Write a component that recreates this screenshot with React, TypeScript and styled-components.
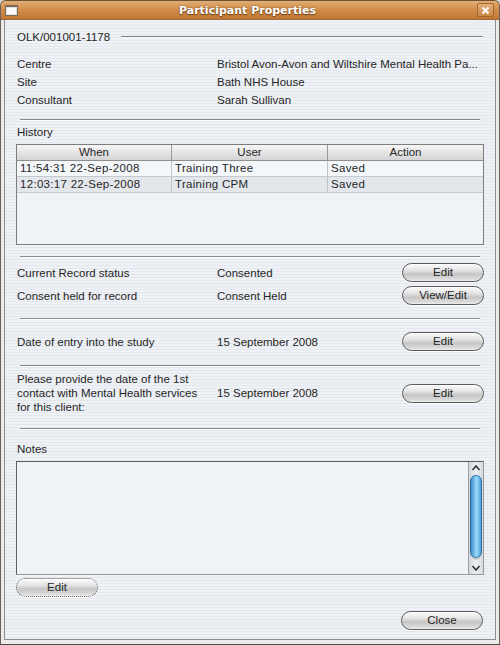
import React from "react";
import styled, { createGlobalStyle } from "styled-components";

const Global = createGlobalStyle`
  html, body { margin: 0; padding: 0; background: #d8d4ce; }
  body { font-family: "Liberation Sans", Arial, sans-serif; }
`;

const Window = styled.div`
  width: 500px;
  height: 645px;
  box-sizing: border-box;
  display: flex;
  flex-direction: column;
  background: #c98b4e;
  border-radius: 6px 6px 0 0;
  overflow: hidden;
  border: 1px solid #6e5236;
  border-bottom-color: #4a4a4a;
  border-left-color: #6a6258;
  border-right-color: #6a6258;
`;

const TitleBar = styled.div`
  height: 18px;
  flex: none;
  display: flex;
  align-items: center;
  padding: 0 4px;
  background: linear-gradient(#e2ad77, #d28f4b 45%, #c07634);
  border-bottom: 1px solid #9c6a3a;
`;

const MenuIcon = styled.div`
  width: 11px;
  height: 8px;
  background: #fafafa;
  border: 1px solid #7a6a5a;
  border-top-width: 2px;
  box-shadow: inset 0 0 0 1px #e0e0e0;
  flex: none;
`;

const Title = styled.div`
  flex: 1;
  text-align: center;
  font-family: "DejaVu Sans", sans-serif;
  font-weight: bold;
  font-size: 11px;
  color: #fff;
  text-shadow: 0 1px 1px #6a3f16, 0 0 2px #8a5220;
`;

const CloseBtn = styled.div`
  width: 15px;
  height: 12px;
  border: 1px solid #a4672d;
  border-radius: 2px;
  background: linear-gradient(#e3b07c, #c98743);
  display: flex;
  align-items: center;
  justify-content: center;
  flex: none;
  margin-right: 1px;
`;

const Frame = styled.div`
  flex: 1;
  display: flex;
  flex-direction: column;
  background: #ecebe8;
  padding: 0 3px 4px 3px;
`;

const Content = styled.div`
  flex: 1;
  display: flex;
  flex-direction: column;
  padding: 0 11px;
  border: 1px solid #8e8e8e;
  border-top: none;
  color: #262626;
  font-size: 11.5px;
  background: repeating-linear-gradient(
    to bottom,
    #eef1f5 0px,
    #eef1f5 2px,
    #e4e8ed 2px,
    #e4e8ed 3px
  );
`;

const HeaderRow = styled.div`
  margin-top: 9px;
  height: 16px;
  display: flex;
  align-items: center;
  gap: 11px;
  padding-left: 1px;
`;

const HeaderLine = styled.div`
  flex: 1;
  height: 0;
  border-top: 1px solid #7e7e7e;
  border-bottom: 1px solid #fbfbfb;
  margin-right: 1px;
`;

const InfoGrid = styled.div`
  margin-top: 10px;
  display: grid;
  grid-template-columns: 200px 1fr;
  grid-auto-rows: 18px;
  align-items: center;
  padding-left: 1px;
`;

const Value = styled.div`
  white-space: nowrap;
  overflow: hidden;
`;

const Separator = styled.div<{ $mt: number }>`
  margin: ${(p) => p.$mt}px 4px 0 4px;
  height: 0;
  border-top: 1px solid #8a8a8a;
  border-bottom: 1px solid #fdfdfd;
`;

const Label = styled.div<{ $mt: number }>`
  margin-top: ${(p) => p.$mt}px;
  height: 14px;
  line-height: 14px;
  padding-left: 1px;
`;

const Table = styled.div`
  margin-top: 5px;
  height: 101px;
  box-sizing: border-box;
  border: 1px solid #7d7d7d;
  background: #eff3f7;
  display: flex;
  flex-direction: column;
`;

const TableRow = styled.div<{ $alt?: boolean; $head?: boolean }>`
  display: grid;
  grid-template-columns: 155px 156px 1fr;
  height: 16px;
  box-sizing: border-box;
  border-bottom: 1px solid ${(p) => (p.$head ? "#8e8e8e" : "#c4c9cf")};
  background: ${(p) =>
    p.$head
      ? "linear-gradient(#f6f6f6, #e2e2e2 60%, #d4d4d4)"
      : p.$alt
      ? "#e3e7ec"
      : "#f4f7fa"};
`;

const Cell = styled.div<{ $head?: boolean; $last?: boolean }>`
  line-height: 15px;
  padding: 0 3px;
  white-space: nowrap;
  overflow: hidden;
  letter-spacing: ${(p) => (p.$head ? "0" : "0.3px")};
  text-align: ${(p) => (p.$head ? "center" : "left")};
  border-right: ${(p) =>
    p.$last ? "none" : `1px solid ${p.$head ? "#9a9a9a" : "#bfc4ca"}`};
`;

const ActionRow = styled.div<{ $mt: number }>`
  margin-top: ${(p) => p.$mt}px;
  display: grid;
  grid-template-columns: 200px 1fr 82px;
  align-items: center;
  padding-left: 1px;
`;

const MultiLabel = styled.div`
  line-height: 14px;
  white-space: nowrap;
`;

const PillButton = styled.button<{ $dotted?: boolean }>`
  width: 82px;
  height: 19px;
  box-sizing: border-box;
  border-radius: 10px;
  border: 1px ${(p) => (p.$dotted ? "dotted" : "solid")} #5a5a5a;
  background: linear-gradient(#fbfbfb 0%, #e6e6e6 35%, #c6c6c6 60%, #d8d8d8 85%, #ececec 100%);
  box-shadow: inset 0 1px 0 #ffffff, 0 1px 0 rgba(255, 255, 255, 0.8);
  font-family: "Liberation Sans", Arial, sans-serif;
  font-size: 11.5px;
  color: #262626;
  padding: 0;
  line-height: 17px;
`;

const NotesBox = styled.div`
  margin-top: 5px;
  height: 114px;
  box-sizing: border-box;
  border: 1px solid #5f5f5f;
  border-right-color: #9a9a9a;
  border-bottom-color: #9a9a9a;
  background: #eff3f7;
  display: flex;
  justify-content: flex-end;
`;

const ScrollBar = styled.div`
  width: 14px;
  background: linear-gradient(to right, #d2d6db, #eef0f3 50%, #d6dade);
  border-left: 1px solid #9ca1a7;
  display: flex;
  flex-direction: column;
  align-items: center;
`;

const Arrow = styled.div`
  height: 12px;
  width: 14px;
  display: flex;
  align-items: center;
  justify-content: center;
  flex: none;
`;

const Thumb = styled.div`
  flex: 1;
  width: 12px;
  margin: 1px 0 4px;
  border-radius: 6px;
  border: 1px solid #2f6f9c;
  box-sizing: border-box;
  background: linear-gradient(to right, #3d8fcb, #7fc7f2 40%, #9fdaf9 55%, #4aa2dc);
  box-shadow: 0 2px 0 #c9ccd2;
`;

const BottomBar = styled.div`
  margin-top: 14px;
  display: flex;
  justify-content: flex-end;
  margin-right: 1px;
`;

const LeftBar = styled.div`
  margin-top: 3px;
  display: flex;
`;

const Chevron = ({ up }: { up?: boolean }) => (
  <svg width="10" height="8" viewBox="0 0 10 8">
    <path
      d={up ? "M1.5 6 L5 2 L8.5 6" : "M1.5 2 L5 6 L8.5 2"}
      fill="none"
      stroke="#333"
      strokeWidth="1.6"
    />
  </svg>
);

const history = [
  ["11:54:31 22-Sep-2008", "Training Three", "Saved"],
  ["12:03:17 22-Sep-2008", "Training CPM", "Saved"],
];

export default function App() {
  return (
    <>
      <Global />
      <Window>
        <TitleBar>
          <MenuIcon />
          <Title>Participant Properties</Title>
          <CloseBtn>
            <svg width="9" height="9" viewBox="0 0 9 9">
              <path d="M1.5 1.5 L7.5 7.5 M7.5 1.5 L1.5 7.5" stroke="#fff" strokeWidth="2" />
            </svg>
          </CloseBtn>
        </TitleBar>
        <Frame>
          <Content>
            <HeaderRow>
              <span>OLK/001001-1178</span>
              <HeaderLine />
            </HeaderRow>
            <InfoGrid>
              <div>Centre</div>
              <Value>Bristol Avon-Avon and Wiltshire Mental Health Pa...</Value>
              <div>Site</div>
              <Value>Bath NHS House</Value>
              <div>Consultant</div>
              <Value>Sarah Sullivan</Value>
            </InfoGrid>
            <Separator $mt={10} />
            <Label $mt={4}>History</Label>
            <Table>
              <TableRow $head>
                <Cell $head>When</Cell>
                <Cell $head>User</Cell>
                <Cell $head $last>Action</Cell>
              </TableRow>
              {history.map((r, i) => (
                <TableRow key={i} $alt={i % 2 === 1}>
                  <Cell>{r[0]}</Cell>
                  <Cell>{r[1]}</Cell>
                  <Cell $last>{r[2]}</Cell>
                </TableRow>
              ))}
            </Table>
            <Separator $mt={11} />
            <ActionRow $mt={5}>
              <div>Current Record status</div>
              <div>Consented</div>
              <PillButton>Edit</PillButton>
            </ActionRow>
            <ActionRow $mt={4}>
              <div>Consent held for record</div>
              <div>Consent Held</div>
              <PillButton>View/Edit</PillButton>
            </ActionRow>
            <Separator $mt={13} />
            <ActionRow $mt={12}>
              <div>Date of entry into the study</div>
              <div>15 September 2008</div>
              <PillButton>Edit</PillButton>
            </ActionRow>
            <Separator $mt={14} />
            <ActionRow $mt={5}>
              <MultiLabel>
                Please provide the date of the 1st
                <br />
                contact with Mental Health services
                <br />
                for this client:
              </MultiLabel>
              <div>15 September 2008</div>
              <PillButton>Edit</PillButton>
            </ActionRow>
            <Separator $mt={14} />
            <Label $mt={12}>Notes</Label>
            <NotesBox>
              <ScrollBar>
                <Arrow>
                  <Chevron up />
                </Arrow>
                <Thumb />
                <Arrow>
                  <Chevron />
                </Arrow>
              </ScrollBar>
            </NotesBox>
            <LeftBar>
              <PillButton $dotted>Edit</PillButton>
            </LeftBar>
            <BottomBar>
              <PillButton>Close</PillButton>
            </BottomBar>
          </Content>
        </Frame>
      </Window>
    </>
  );
}
